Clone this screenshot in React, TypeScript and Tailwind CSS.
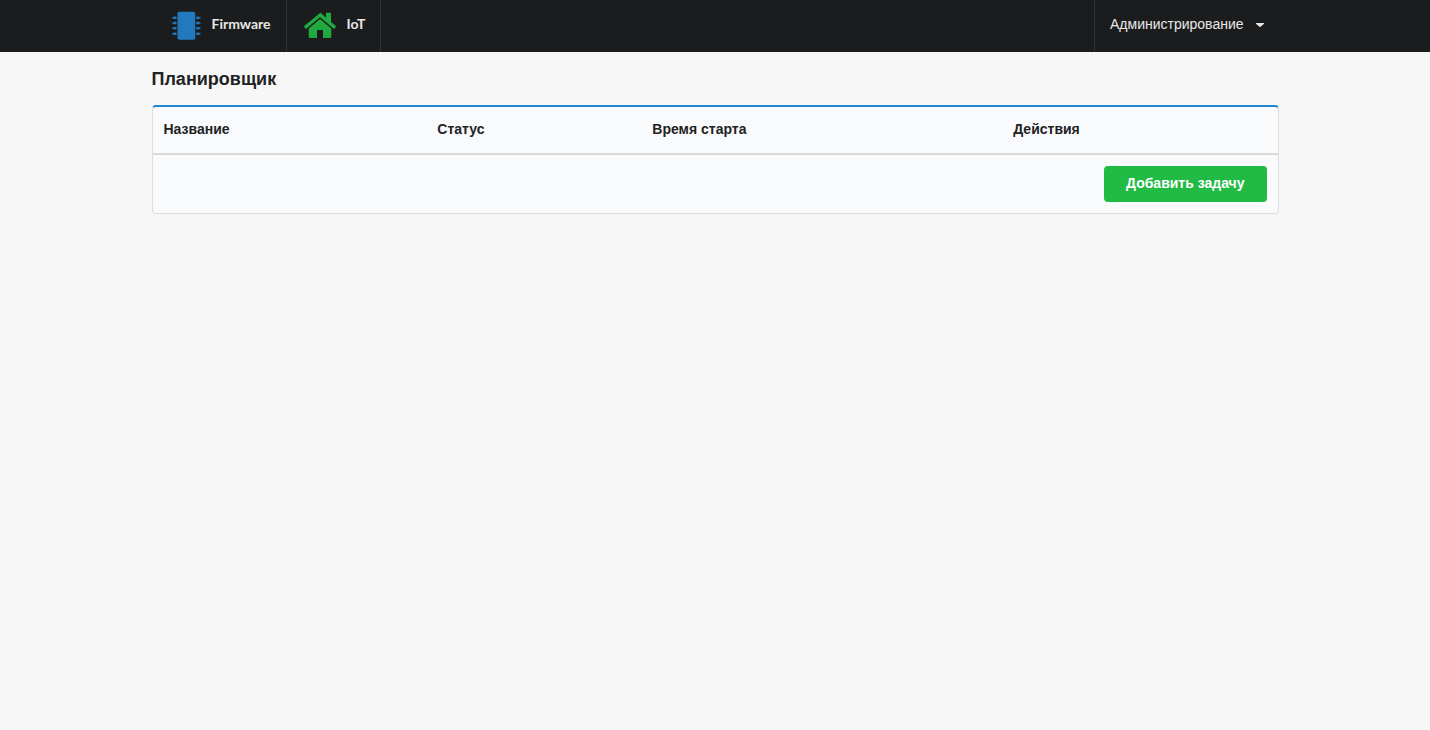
import React from 'react';

interface MenuLink {
  title: string;
  href: string;
  icon: React.ReactNode;
}

const ChipIcon = () => (
  <svg viewBox="0 0 36 36" className="w-9 h-9" aria-hidden="true">
    <g fill="#2279bd">
      <rect x="9.500" y="3.700" width="17.800" height="28" rx="1.800" />
      {[9.7, 15, 20.3, 25.7].map((y) => (
        <React.Fragment key={y}>
          <rect x="5.500" y={y - 1.3} width="3" height="2.600" rx="0.500" />
          <rect x="4.300" y={y - 0.7} width="2" height="1.400" />
          <rect x="28.300" y={y - 1.3} width="3" height="2.600" rx="0.500" />
          <rect x="30.500" y={y - 0.7} width="2" height="1.400" />
        </React.Fragment>
      ))}
    </g>
  </svg>
);

const HouseIcon = () => (
  <svg viewBox="0 0 36 36" className="w-9 h-9" aria-hidden="true">
    <g fill="#21a83f" transform="translate(0 .5)">
      <path d="M17 4.400 1.200 17.400a.8.8 0 0 0 0 1l1.200 1.500a.8.8 0 0 0 1.100.1L17 8.800 30.500 20a.8.8 0 0 0 1.100-.1l1.200-1.500a.8.8 0 0 0 0-1L28 13.400V5a.7.7 0 0 0-.7-.7h-3.600a.7.7 0 0 0-.7.7v4.200l-4.600-4.200a1.100 1.100 0 0 0-1.400-.6z" />
      <path d="M17 10.600 5.700 20v8.200a1.300 1.300 0 0 0 1.300 1.300h7v-8h6v8h7a1.300 1.300 0 0 0 1.300-1.300V20z" />
    </g>
  </svg>
);

const links: MenuLink[] = [
  { title: 'Firmware', href: '#firmware', icon: <ChipIcon /> },
  { title: 'IoT', href: '#iot', icon: <HouseIcon /> },
];

const columns = ['Название', 'Статус', 'Время старта', 'Действия'];

const Navbar = () => (
  <nav className="bg-[#1b1c1d] text-white/90">
    <div className="max-w-[1127px] mx-auto h-[52px] flex">
      {links.map((link) => (
        <a
          key={link.title}
          href={link.href}
          className="flex items-center gap-2 pl-4 pr-[15px] border-r border-white/10 font-[Lato,sans-serif] font-bold"
        >
          {link.icon}
          <span className="pb-1">{link.title}</span>
        </a>
      ))}
      <button
        type="button"
        className="ml-auto flex items-center gap-3 px-[15px] border-l border-white/10"
        aria-haspopup="menu"
      >
        <span className="pb-1">Администрирование</span>
        <svg viewBox="0 0 8 4" className="w-2 h-1 mb-0.5" aria-hidden="true">
          <path d="M.6 0h6.800a.5.5 0 0 1 .4.900L4.500 3.800a.7.7 0 0 1-1 0L.2.900A.5.5 0 0 1 .6 0z" fill="currentColor" />
        </svg>
      </button>
    </div>
  </nav>
);

const Scheduler = () => (
  <main className="max-w-[1127px] mx-auto pt-[15px]">
    <h1 className="text-lg leading-6 font-bold mb-[14px]">Планировщик</h1>
    <table className="w-full border-separate border-spacing-0 rounded-sm border border-t-2 border-[#dededf] border-t-[#2185d0] bg-[#f9fafb] text-left">
      <thead>
        <tr>
          {columns.map((column) => (
            <th key={column} scope="col" className="px-[11px] pt-3 pb-[14px] border-b border-[#dededf]">
              {column}
            </th>
          ))}
        </tr>
      </thead>
      <tbody />
      <tfoot>
        <tr>
          <td colSpan={columns.length} className="p-[11px] border-t border-[#d4d4d5]">
            <button
              type="button"
              className="block ml-auto h-9 px-[22px] pb-0.5 rounded-sm bg-[#21ba45] hover:bg-[#16ab39] text-white font-bold"
            >
              Добавить задачу
            </button>
          </td>
        </tr>
      </tfoot>
    </table>
  </main>
);

export default function App() {
  return (
    <div className="min-h-screen bg-[#f7f7f7] text-[#212223] text-sm font-['Liberation_Sans',Arial,sans-serif]">
      <Navbar />
      <Scheduler />
    </div>
  );
}
